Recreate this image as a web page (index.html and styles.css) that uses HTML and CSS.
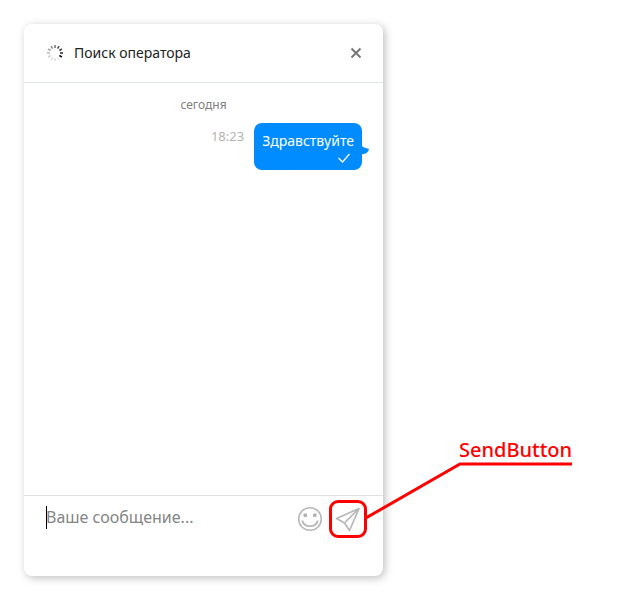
FILE: index.html
```html
<!DOCTYPE html>
<html lang="ru">
<head>
<meta charset="utf-8">
<meta name="viewport" content="width=device-width, initial-scale=1">
<title>Чат</title>
<link rel="stylesheet" href="styles.css">
</head>
<body>
<main class="chat">
  <header class="chat-header">
    <svg class="spinner" viewBox="0 0 18 18" aria-hidden="true">
      <g stroke-width="1.600">
        <path d="M9 1v3" stroke="#777"/>
        <path d="M9 1v3" stroke="#555" transform="rotate(30 9 9)"/>
        <path d="M9 1v3" stroke="#444" transform="rotate(60 9 9)"/>
        <path d="M9 1v3" stroke="#333" transform="rotate(90 9 9)"/>
        <path d="M9 1v3" stroke="#111" transform="rotate(120 9 9)"/>
        <path d="M9 1v3" stroke="#eee" transform="rotate(150 9 9)"/>
        <path d="M9 1v3" stroke="#e2e2e2" transform="rotate(180 9 9)"/>
        <path d="M9 1v3" stroke="#ddd" transform="rotate(210 9 9)"/>
        <path d="M9 1v3" stroke="#ccc" transform="rotate(240 9 9)"/>
        <path d="M9 1v3" stroke="#bbb" transform="rotate(270 9 9)"/>
        <path d="M9 1v3" stroke="#a5a5a5" transform="rotate(300 9 9)"/>
        <path d="M9 1v3" stroke="#8c8c8c" transform="rotate(330 9 9)"/>
      </g>
    </svg>
    <h1 class="chat-title">Поиск оператора</h1>
    <button class="icon-button close" type="button" aria-label="Закрыть">
      <svg width="12" height="12" viewBox="0 0 12 12"><path d="M1.500 1.500l9 9M10.500 1.500l-9 9" stroke="#777" stroke-width="2" fill="none"/></svg>
    </button>
  </header>
  <section class="messages">
    <p class="day">сегодня</p>
    <div class="message">
      <time class="time">18:23</time>
      <div class="bubble">
        <span class="bubble-text">Здравствуйте</span>
        <svg class="check" width="12" height="10" viewBox="0 0 12 10"><path d="M.5 5l4 4 7-8" stroke="#fff" stroke-width="1.200" fill="none"/></svg>
        <svg class="tail" width="8" height="9" viewBox="0 0 8 9"><path d="M0 0C2 2 5 2.500 7 3C6.500 6 4 8 0 8z" fill="#008cff"/></svg>
      </div>
    </div>
  </section>
  <form class="composer">
    <div class="field">
      <textarea class="input" rows="1" placeholder="Ваше сообщение..." aria-label="Ваше сообщение"></textarea>
      <span class="caret"></span>
    </div>
    <button class="icon-button emoji" type="button" aria-label="Смайлы">
      <svg width="26" height="26" viewBox="0 0 26 26"><g fill="none" stroke="#b8b8b8" stroke-width="1.600"><circle cx="13" cy="13" r="11.300"/><path d="M5.200 14.500c1.800 7.500 13.800 7.500 15.600 0" stroke-width="1.800"/></g><rect x="6.500" y="7.500" width="3.500" height="3.500" rx="1" fill="#b0b0b0"/><rect x="16" y="7.500" width="3.500" height="3.500" rx="1" fill="#b0b0b0"/></svg>
    </button>
    <div class="send-wrap">
      <button class="icon-button send" type="submit" aria-label="Отправить">
        <svg width="26" height="26" viewBox="0 0 26 26"><path d="M24 2.500L1.500 12.500l8 4.500 5 7.500zM24 2.500L9.500 17" fill="none" stroke="#b8b8b8" stroke-width="1.700" stroke-linejoin="round"/></svg>
      </button>
      <div class="callout">
        <svg class="callout-line" width="208" height="58" viewBox="0 0 208 58"><path d="M0 56.500L95 2h112" fill="none" stroke="#f00" stroke-width="3"/></svg>
        <span class="callout-label">SendButton</span>
      </div>
    </div>
  </form>
</main>
</body>
</html>
```
FILE: styles.css
```css
* {
  box-sizing: border-box;
}

body {
  display: flex;
  min-height: 100vh;
  margin: 0;
  padding: 24px 24px 26px;
  background: #fff;
  color: #222;
  font-family: "Noto Sans", "Open Sans", sans-serif;
}

.chat {
  display: flex;
  flex: 1;
  flex-direction: column;
  max-width: 359px;
  border-radius: 8px;
  background: #fff;
  box-shadow: 2px 2px 8px rgba(0, 0, 0, 0.26);
}

.chat-header {
  display: flex;
  align-items: center;
  gap: 10px;
  padding: 18px 20px 18px 22px;
  border-bottom: 1px solid #dfe5e8;
}

.spinner {
  width: 18px;
  height: 18px;
}

.chat-title {
  flex: 1;
  margin: 0;
  font-size: 14px;
  font-weight: 400;
  line-height: 22px;
}

.icon-button {
  display: flex;
  align-items: center;
  justify-content: center;
  padding: 0;
  border: 0;
  background: none;
  cursor: pointer;
}

.close {
  width: 14px;
  height: 14px;
}

.messages {
  flex: 1;
  padding: 12px 21px;
}

.day {
  margin: 0 0 8px;
  color: #808080;
  font-size: 12px;
  line-height: 20px;
  text-align: center;
}

.message {
  display: flex;
  justify-content: flex-end;
  gap: 10px;
}

.time {
  padding-top: 3px;
  color: #b3b3b3;
  font-size: 13px;
  line-height: 20px;
}

.bubble {
  position: relative;
  display: flex;
  flex-direction: column;
  padding: 8px 8px 7px;
  border-radius: 8px;
  background: #008cff;
  color: #fff;
}

.bubble-text {
  font-size: 14px;
  line-height: 20px;
}

.check {
  align-self: flex-end;
  margin: 2px 4px 0 0;
}

.tail {
  position: absolute;
  top: 23px;
  left: 100%;
}

.composer {
  display: flex;
  align-items: flex-start;
  min-height: 81px;
  padding: 4px 16px 16px 22px;
  border-top: 1px solid #dfe3e5;
}

.field {
  position: relative;
  display: flex;
  flex: 1;
  padding-top: 5px;
}

.input {
  width: 100%;
  padding: 0;
  border: 0;
  outline: 0;
  background: none;
  color: #222;
  font: 16px/24px "Noto Sans", "Open Sans", sans-serif;
  resize: none;
}

.input::placeholder {
  color: #858585;
}

.caret {
  position: absolute;
  top: 6px;
  left: 0;
  width: 1px;
  height: 23px;
  background: #000;
}

.emoji {
  width: 26px;
  height: 38px;
  margin-right: 6px;
}

.send-wrap {
  position: relative;
}

.send {
  width: 38px;
  height: 38px;
  border: 3px solid #f00;
  border-radius: 9px;
}

.callout {
  position: absolute;
  bottom: 18px;
  left: 36px;
}

.callout-line {
  display: block;
}

.callout-label {
  position: absolute;
  bottom: 100%;
  left: 94px;
  color: #f00;
  font-size: 20px;
  font-weight: 500;
  line-height: 24px;
}
```
